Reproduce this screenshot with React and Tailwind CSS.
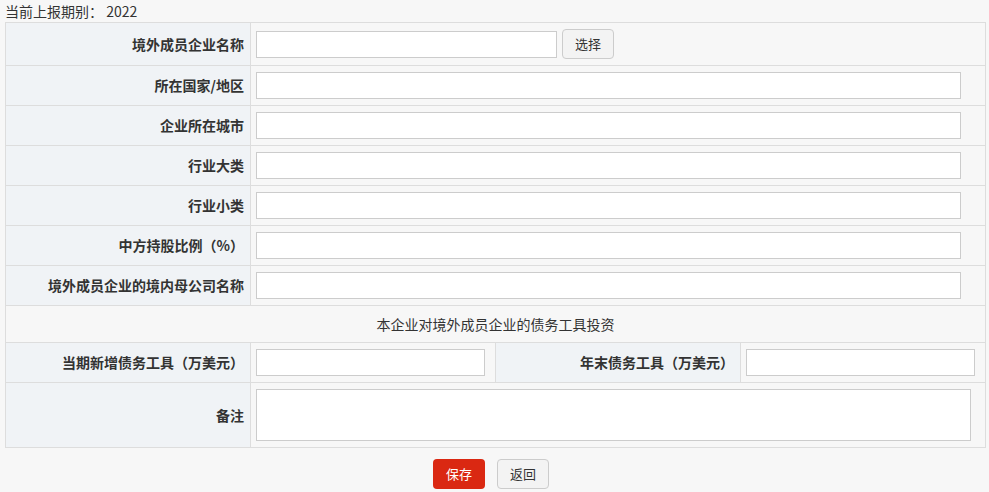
import React from 'react';

const font = { fontFamily: '"Noto Sans CJK SC", "Liberation Sans", sans-serif' };

const labelCls = "border border-[#dddddd] bg-[#f0f3f6] pr-[6px] text-right font-bold text-[#333]";
const valueCls = "border border-[#dddddd] bg-[#f7f7f7] pl-[5px]";
const inputCls = "block h-[27px] border border-[#cccccc] bg-white outline-none";

const fullRows = [
  "所在国家/地区",
  "企业所在城市",
  "行业大类",
  "行业小类",
  "中方持股比例（%）",
  "境外成员企业的境内母公司名称",
];

export default function App() {
  return (
    <div className="min-h-[492px] w-[989px] bg-[#f7f7f7] text-[14px] text-[#333]" style={font}>
      <div className="flex h-[22px] items-center pl-[5px]">当前上报期别： 2022</div>

      <div className="pl-[5px]">
        <table className="w-[980px] table-fixed border-collapse">
          <colgroup>
            <col className="w-[245px]" />
            <col className="w-[245px]" />
            <col className="w-[245px]" />
            <col className="w-[245px]" />
          </colgroup>
          <tbody>
            <tr className="h-[43px]">
              <td className={labelCls}>境外成员企业名称</td>
              <td className={valueCls} colSpan={3}>
                <div className="flex items-center gap-[5px]">
                  <input className={`${inputCls} w-[301px]`} />
                  <button className="h-[30px] w-[52px] rounded-[4px] border border-[#cccccc] bg-[#f3f3f3] text-[13px] text-[#333]">
                    选择
                  </button>
                </div>
              </td>
            </tr>
            {fullRows.map((label) => (
              <tr key={label} className="h-[40px]">
                <td className={labelCls}>{label}</td>
                <td className={valueCls} colSpan={3}>
                  <input className={`${inputCls} w-[705px]`} />
                </td>
              </tr>
            ))}
            <tr className="h-[37px]">
              <td colSpan={4} className="border border-[#dddddd] bg-[#f7f7f7] text-center text-[#333]">
                本企业对境外成员企业的债务工具投资
              </td>
            </tr>
            <tr className="h-[40px]">
              <td className={labelCls}>当期新增债务工具（万美元）</td>
              <td className={valueCls}>
                <input className={`${inputCls} w-[229px]`} />
              </td>
              <td className={labelCls}>年末债务工具（万美元）</td>
              <td className={valueCls}>
                <input className={`${inputCls} w-[229px]`} />
              </td>
            </tr>
            <tr className="h-[65px]">
              <td className={labelCls}>备注</td>
              <td className={valueCls} colSpan={3}>
                <textarea className="block h-[52px] w-[715px] resize-none border border-[#cccccc] bg-white outline-none" />
              </td>
            </tr>
          </tbody>
        </table>
      </div>

      <div className="mt-[11px] flex justify-center gap-[12px] pr-[7px]">
        <button className="h-[30px] w-[52px] rounded-[4px] bg-[#da2812] text-[13px] text-white">保存</button>
        <button className="h-[30px] w-[52px] rounded-[4px] border border-[#cccccc] bg-[#f3f3f3] text-[13px] text-[#333]">返回</button>
      </div>
    </div>
  );
}
